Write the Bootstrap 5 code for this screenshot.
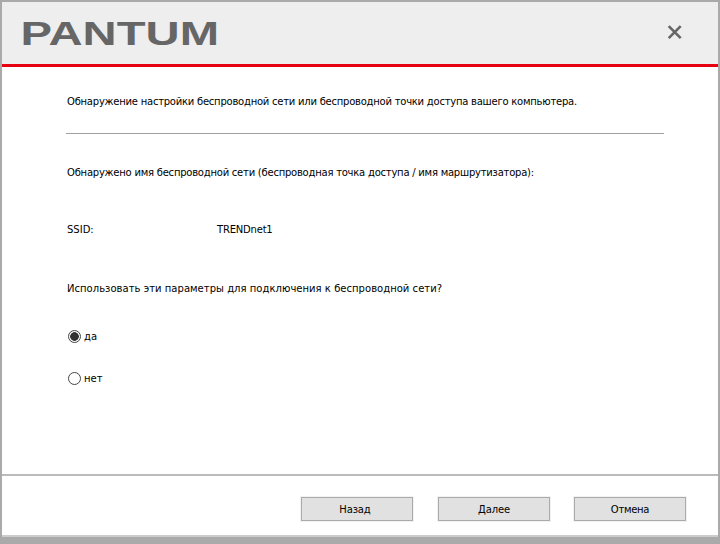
<!DOCTYPE html>
<html lang="ru">
<head>
  <meta charset="UTF-8"/>
  <meta name="viewport" content="width=device-width, initial-scale=1.0"/>
  <title>Pantum</title>
  <link rel="stylesheet" href="https://cdn.jsdelivr.net/npm/bootstrap@5.3.0/dist/css/bootstrap.min.css"/>
  <style>
    body { background: #aaa; font-family: "DejaVu Sans", sans-serif; font-size: 10px; color: #000; }
    .setup-window { width: 720px; height: 544px; padding: 2px 2px 0; }
    .setup-head { height: 62px; background: #eee; padding: 0 36px 0 17px; }
    .logo-text { font-family: "Liberation Sans", sans-serif; font-weight: 700; font-size: 33px; fill: #666; }
    .red-line { height: 3px; background: #e60012; }
    .setup-body { height: 407px; background: #fff; padding: 0 54px 0 65px; }
    .body-line { height: 14px; line-height: 14px; white-space: nowrap; }
    .line-1 { margin-top: 28px; letter-spacing: -.235px; }
    .sep { height: 1px; background: #a0a0a0; margin: 24px 0 0 -1px; opacity: 1; border: 0; }
    .line-2 { margin-top: 32px; letter-spacing: -.23px; }
    .line-3 { margin-top: 43px; }
    .line-4 { margin-top: 45px; letter-spacing: .03px; }
    .ssid-key { width: 150px; }
    .ssid-val { letter-spacing: -.2px; }
    .radio-row { height: 14px; line-height: 14px; gap: 3px; margin: 0; padding: 0; min-height: 0; }
    .radio-1 { margin-top: 33px; }
    .radio-2 { margin-top: 28px; }
    .radio-row .form-check-input { float: none; margin: 0 0 0 1px; width: 13px; height: 13px; border: 1px solid #444; background: #fff; flex: none; box-shadow: none; }
    .radio-row .form-check-input:checked { background: radial-gradient(circle, #333 0 4px, #fff 4.6px); border-color: #444; }
    .radio-row .form-check-label { padding-top: 2px; }
    .setup-foot { height: 63px; background: #fff; border-top: 2px solid #bbb; border-bottom: 2px solid #ccc; padding: 21px 32px 0 0; gap: 24px; }
    .setup-btn { width: 112px; height: 24px; padding: 0; background: #e1e1e1; border: 1px solid #aaa; border-radius: 0; font-size: 10px; letter-spacing: -.15px; color: #000; box-shadow: 0 0 0 1px #f2f2f2; }
    .setup-btn:hover { background: #e1e1e1; border-color: #aaa; color: #000; }
    .btn-back { margin-right: 1px; padding-right: 4px; }
    .btn-cancel { letter-spacing: -.3px; }
  </style>
</head>
<body class="m-0">
  <div class="setup-window d-flex flex-column">
    <div class="setup-head d-flex align-items-center justify-content-between">
      <svg width="204" height="42" viewBox="0 0 204 42" role="img" aria-label="PANTUM">
        <text class="logo-text" x="1.5" y="33" textLength="198.5" lengthAdjust="spacingAndGlyphs">PANTUM</text>
      </svg>
      <svg width="16" height="16" viewBox="0 0 16 16">
        <path d="M2.7 1.2 14.7 13.2M14.7 1.2 2.7 13.2" stroke="#666" stroke-width="2.6" fill="none"/>
      </svg>
    </div>
    <div class="red-line"></div>
    <div class="setup-body">
      <div class="body-line line-1">Обнаружение настройки беспроводной сети или беспроводной точки доступа вашего компьютера.</div>
      <hr class="sep"/>
      <div class="body-line line-2">Обнаружено имя беспроводной сети (беспроводная точка доступа / имя маршрутизатора):</div>
      <div class="body-line line-3 d-flex"><span class="ssid-key">SSID:</span><span class="ssid-val">TRENDnet1</span></div>
      <div class="body-line line-4">Использовать эти параметры для подключения к беспроводной сети?</div>
      <div class="form-check radio-row radio-1 d-flex align-items-center">
        <input class="form-check-input" type="radio" name="useWifi" id="wifi-yes" checked/>
        <label class="form-check-label" for="wifi-yes">да</label>
      </div>
      <div class="form-check radio-row radio-2 d-flex align-items-center">
        <input class="form-check-input" type="radio" name="useWifi" id="wifi-no"/>
        <label class="form-check-label" for="wifi-no">нет</label>
      </div>
    </div>
    <div class="setup-foot d-flex justify-content-end">
      <button type="button" class="btn setup-btn btn-back">Назад</button>
      <button type="button" class="btn setup-btn">Далее</button>
      <button type="button" class="btn setup-btn btn-cancel">Отмена</button>
    </div>
  </div>
  <script src="https://cdn.jsdelivr.net/npm/bootstrap@5.3.0/dist/js/bootstrap.bundle.min.js"></script>
</body>
</html>
